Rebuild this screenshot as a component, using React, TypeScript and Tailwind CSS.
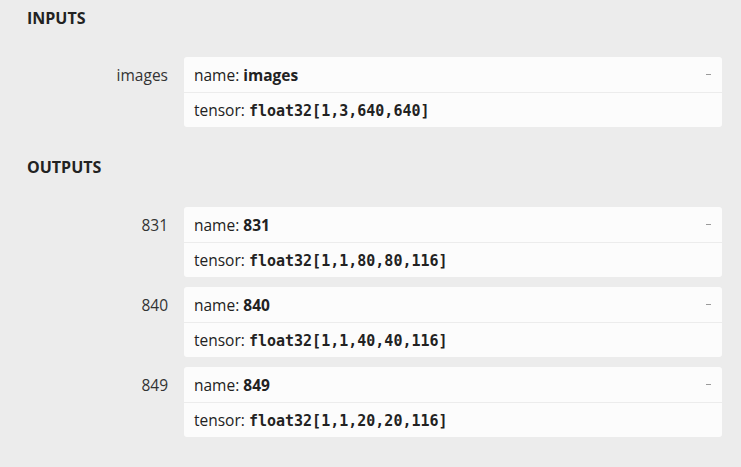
import React from "react";

type Item = { label: string; name: string; type: string };

const inputs: Item[] = [{ label: "images", name: "images", type: "float32[1,3,640,640]" }];
const outputs: Item[] = [
  { label: "831", name: "831", type: "float32[1,1,80,80,116]" },
  { label: "840", name: "840", type: "float32[1,1,40,40,116]" },
  { label: "849", name: "849", type: "float32[1,1,20,20,116]" },
];

const mono = { fontFamily: '"DejaVu Sans Mono", "Liberation Mono", monospace' };

function Entry({ item }: { item: Item }) {
  return (
    <div className="flex">
      <div className="w-[168px] shrink-0 h-[36px] pt-[2px] flex items-center justify-end text-[15.5px] text-[#333]">
        {item.label}
      </div>
      <div className="ml-[16px] w-[538px] rounded-[3px] bg-[#fcfcfc]">
        <div className="h-[36px] pt-[2px] flex items-center justify-between pl-[10px] pr-[11px] border-b border-[#ececec] text-[15.5px] text-[#222]">
          <span>
            name: <b className="font-bold">{item.name}</b>
          </span>
          <span className="w-[5px] h-px bg-[#9a9a9a] -mt-[2px]" />
        </div>
        <div className="h-[34px] pt-px flex items-center pl-[10px] text-[15.5px] text-[#222]">
          <span>
            tensor:{" "}
            <b className="font-bold text-[15px]" style={mono}>
              {item.type}
            </b>
          </span>
        </div>
      </div>
    </div>
  );
}

export default function App() {
  return (
    <div
      className="w-[741px] h-[467px] bg-[#ececec] overflow-hidden"
      style={{ fontFamily: '"Open Sans", "Noto Sans", sans-serif' }}
    >
      <div className="pl-[27px] pt-[8px] h-[28px] leading-[20px] text-[16px] font-bold text-[#222]">INPUTS</div>
      <div className="mt-[29px] flex flex-col gap-[10px]">
        {inputs.map((i) => (
          <Entry key={i.label} item={i} />
        ))}
      </div>
      <div className="mt-[30px] pl-[27px] h-[20px] leading-[20px] text-[16px] font-bold text-[#222]">OUTPUTS</div>
      <div className="mt-[30px] flex flex-col gap-[10px]">
        {outputs.map((i) => (
          <Entry key={i.label} item={i} />
        ))}
      </div>
    </div>
  );
}
